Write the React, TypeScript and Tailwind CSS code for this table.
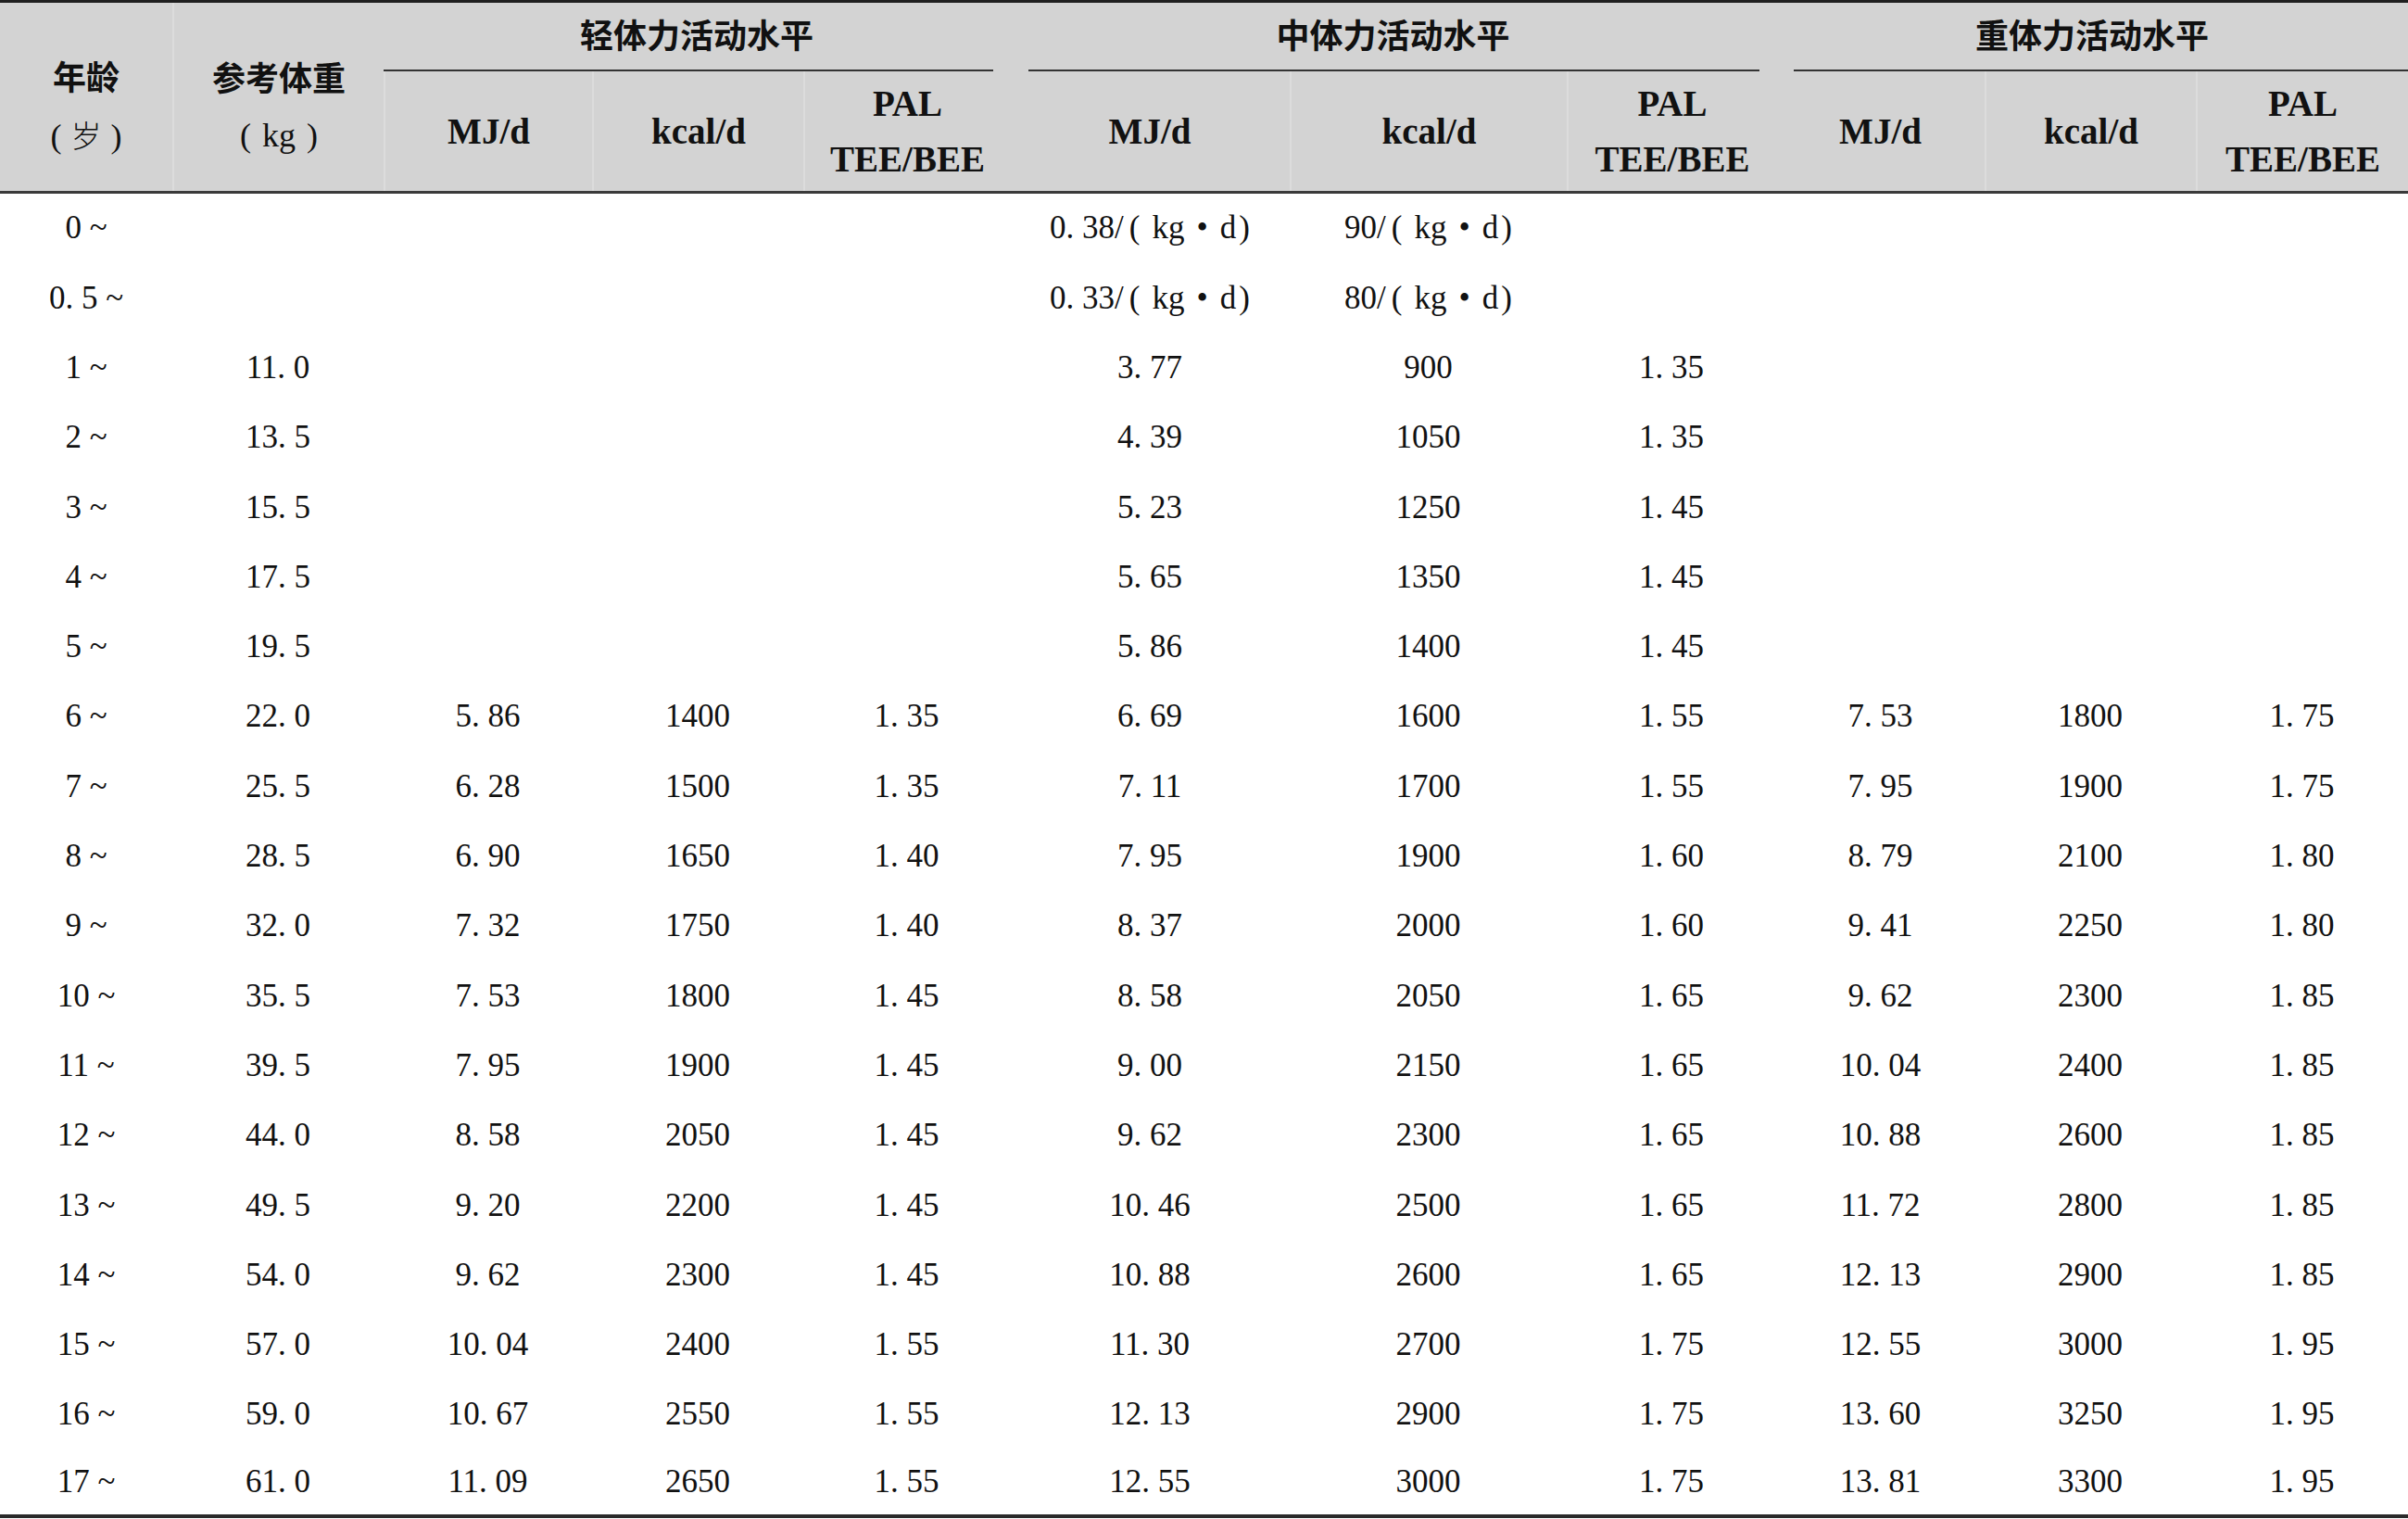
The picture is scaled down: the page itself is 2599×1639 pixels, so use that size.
const cols =
  "grid grid-cols-[186px_228px_225px_228px_223px_302px_299px_226px_225px_228px_229px]";

type Row = [string, string, string[], string[], string[]];

const rows: Row[] = [
  ["0", "", [], ["0.38/kg", "90/kg", ""], []],
  ["0.5", "", [], ["0.33/kg", "80/kg", ""], []],
  ["1", "11.0", [], ["3.77", "900", "1.35"], []],
  ["2", "13.5", [], ["4.39", "1050", "1.35"], []],
  ["3", "15.5", [], ["5.23", "1250", "1.45"], []],
  ["4", "17.5", [], ["5.65", "1350", "1.45"], []],
  ["5", "19.5", [], ["5.86", "1400", "1.45"], []],
  ["6", "22.0", ["5.86", "1400", "1.35"], ["6.69", "1600", "1.55"], ["7.53", "1800", "1.75"]],
  ["7", "25.5", ["6.28", "1500", "1.35"], ["7.11", "1700", "1.55"], ["7.95", "1900", "1.75"]],
  ["8", "28.5", ["6.90", "1650", "1.40"], ["7.95", "1900", "1.60"], ["8.79", "2100", "1.80"]],
  ["9", "32.0", ["7.32", "1750", "1.40"], ["8.37", "2000", "1.60"], ["9.41", "2250", "1.80"]],
  ["10", "35.5", ["7.53", "1800", "1.45"], ["8.58", "2050", "1.65"], ["9.62", "2300", "1.85"]],
  ["11", "39.5", ["7.95", "1900", "1.45"], ["9.00", "2150", "1.65"], ["10.04", "2400", "1.85"]],
  ["12", "44.0", ["8.58", "2050", "1.45"], ["9.62", "2300", "1.65"], ["10.88", "2600", "1.85"]],
  ["13", "49.5", ["9.20", "2200", "1.45"], ["10.46", "2500", "1.65"], ["11.72", "2800", "1.85"]],
  ["14", "54.0", ["9.62", "2300", "1.45"], ["10.88", "2600", "1.65"], ["12.13", "2900", "1.85"]],
  ["15", "57.0", ["10.04", "2400", "1.55"], ["11.30", "2700", "1.75"], ["12.55", "3000", "1.95"]],
  ["16", "59.0", ["10.67", "2550", "1.55"], ["12.13", "2900", "1.75"], ["13.60", "3250", "1.95"]],
  ["17", "61.0", ["11.09", "2650", "1.55"], ["12.55", "3000", "1.75"], ["13.81", "3300", "1.95"]],
];

// typeset decimals the way the printed table does: "5. 86"
const fmt = (v: string) => v.replace(/\.(\d)/g, ". $1");

function Cell({ v }: { v?: string }) {
  if (v && v.endsWith("/kg")) {
    // per body weight: "0. 38/(kg · d)"
    return (
      <div className="flex items-center justify-center whitespace-pre">
        {fmt(v.slice(0, -2))}
        <span className="ml-[6px]">(</span>
        <span className="ml-[13px]">kg</span>
        <span className="mx-[13px]">•</span>
        d<span className="ml-[3px]">)</span>
      </div>
    );
  }
  return (
    <div className="flex items-center justify-center whitespace-pre">{v ? fmt(v) : ""}</div>
  );
}

function Group({ title, line }: { title: string; line: string }) {
  return (
    <div className="col-span-3 flex flex-col">
      <div className="flex flex-1 items-center justify-center pb-[6px] font-['Noto_Sans_CJK_SC',sans-serif] text-[36px] font-bold">
        {title}
      </div>
      <div className={`h-[2px] bg-[#333] ${line}`} />
    </div>
  );
}

const subs = ["MJ/d", "kcal/d", "PAL"];

export default function App() {
  return (
    <div className="w-[2599px] bg-white font-['Liberation_Serif','Noto_Sans_CJK_SC',serif] text-[#111]">
      <div className={`${cols} grid-rows-[74px_129px] border-t-[3px] border-b-[3px] border-t-[#1f1f1f] border-b-[#3a3a3a] bg-[#d3d3d3]`}>
        <div className="row-span-2 flex flex-col items-center justify-center pt-[18px] leading-[64px]">
          <div className="font-['Noto_Sans_CJK_SC',sans-serif] text-[36px] font-bold">年龄</div>
          <div className="text-[36px]">
            (<span className="mx-[10px] font-['Noto_Sans_CJK_SC',sans-serif] text-[33px] font-light">岁</span>)
          </div>
        </div>
        <div className="row-span-2 flex flex-col items-center justify-center border-l-2 border-[#dcdcdc] pt-[18px] leading-[64px]">
          <div className="font-['Noto_Sans_CJK_SC',sans-serif] text-[36px] font-bold">参考体重</div>
          <div className="text-[36px]">
            (<span className="mx-[12px]">kg</span>)
          </div>
        </div>
        <Group title="轻体力活动水平" line="mr-[18px]" />
        <Group title="中体力活动水平" line="ml-[20px] mr-[18px]" />
        <Group title="重体力活动水平" line="ml-[19px]" />
        {[0, 1, 2].map((g) =>
          subs.map((s, i) => (
            <div
              key={`${g}-${s}`}
              className={`flex flex-col items-center justify-center text-[39px] font-bold leading-[60px] ${
                g === 0 || i > 0 ? "border-l-2 border-[#dcdcdc]" : ""
              }`}
            >
              {i === 2 ? (
                <>
                  <div>PAL</div>
                  <div>TEE/BEE</div>
                </>
              ) : (
                s
              )}
            </div>
          ))
        )}
      </div>
      <div className="border-b-4 border-[#2a2a2a] text-[35px]">
        {rows.map(([age, w, light, mid, heavy], r) => (
          <div key={age} className={`${cols} ${r === rows.length - 1 ? "h-[70px]" : "h-[75.3px]"}`}>
            <Cell v={`${age} ~`} />
            <Cell v={w} />
            {[0, 1, 2].map((i) => (
              <Cell key={`l${i}`} v={light[i]} />
            ))}
            {[0, 1, 2].map((i) => (
              <Cell key={`m${i}`} v={mid[i]} />
            ))}
            {[0, 1, 2].map((i) => (
              <Cell key={`h${i}`} v={heavy[i]} />
            ))}
          </div>
        ))}
      </div>
    </div>
  );
}
